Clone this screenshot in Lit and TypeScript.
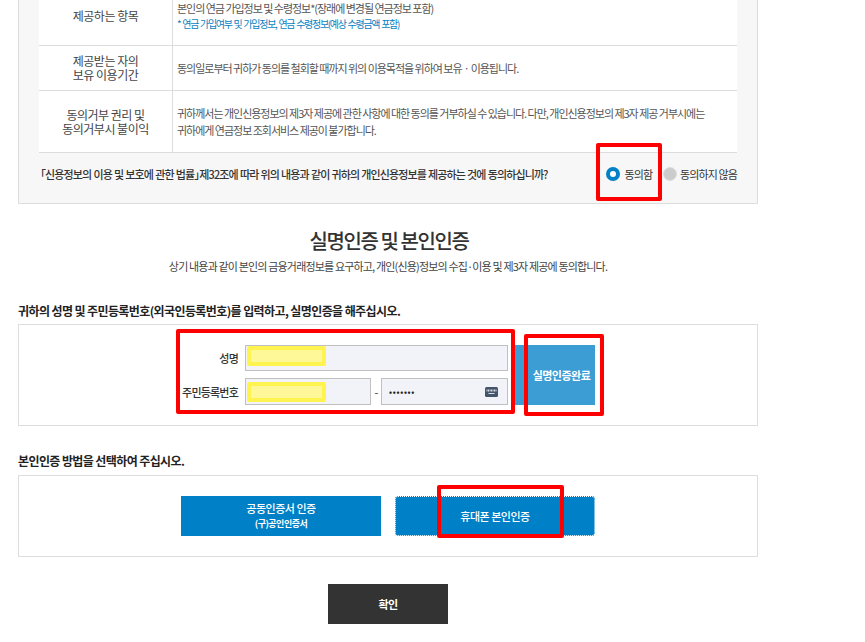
import { css, html, LitElement } from "lit";
import { customElement } from "lit/decorators.js";

@customElement("app-root")
class AppRootElement extends LitElement {
    render() {
        return html`
      <div class="page">
        <section class="panel">
            <div class="row first">
                <div class="head">제공하는 항목</div>
                <div class="cell">
                    <p>본인의 연금 가입정보 및 수령정보*(장래에 변경될 연금정보 포함)</p>
                    <p class="note">* 연금 가입여부 및 가입정보, 연금 수령정보(예상 수령금액 포함)</p>
                </div>
            </div>
            <div class="row second">
                <div class="head">제공받는 자의<br />보유 이용기간</div>
                <div class="cell">
                    <p>동의일로부터 귀하가 동의를 철회할 때까지 위의 이용목적을 위하여 보유ㆍ이용됩니다.</p>
                </div>
            </div>
            <div class="row third">
                <div class="head">동의거부 권리 및<br />동의거부시 불이익</div>
                <div class="cell wide">
                    <p>귀하께서는 개인신용정보의 제3자 제공에 관한 사항에 대한 동의를 거부하실 수 있습니다. 다만, 개인신용정보의 제3자 제공 거부시에는</p>
                    <p>귀하에게 연금정보 조회서비스 제공이 불가합니다.</p>
                </div>
            </div>
            <div class="consent">
                <span class="question">「신용정보의 이용 및 보호에 관한 법률<span class="closing">」</span>제32조에 따라 위의 내용과 같이 귀하의 개인신용정보를 제공하는 것에 동의하십니까?</span>
                <span class="radios">
                    <span class="radio on"></span><span class="agree">동의함</span>
                    <span class="radio off"></span><span>동의하지 않음</span>
                </span>
            </div>
            <i class="mark mark-agree"></i>
        </section>

        <h2>실명인증 및 본인인증</h2>
        <p class="sub">상기 내용과 같이 본인의 금융거래정보를 요구하고, 개인(신용)정보의 수집·이용 및 제3자 제공에 동의합니다.</p>

        <h3 class="name-title">귀하의 성명 및 주민등록번호(외국인등록번호)를 입력하고, 실명인증을 해주십시오.</h3>
        <section class="box name-box">
            <div class="form">
                <div class="fields">
                    <label>성명</label>
                    <div class="input full"><i class="blur"></i></div>
                    <label>주민등록번호</label>
                    <div class="split">
                        <div class="input front"><i class="blur low"></i></div>
                        <span class="dash">-</span>
                        <div class="input back">
                            <span class="dots">•••••••</span>
                            <svg class="keyboard" viewBox="0 0 13 10" width="13" height="10">
                                <rect width="13" height="10" rx="1.5" fill="#44546a" />
                                <path d="M2 2.5v2M3.5 2.5v2M5 2.5v2M6.5 2.5v2M8 2.5v2M9.5 2.5v2M11 2.5v2M3.5 6.5h6" stroke="#fff" stroke-width=".8" fill="none" />
                            </svg>
                        </div>
                    </div>
                </div>
                <a class="done">실명인증완료</a>
                <i class="mark mark-fields"></i>
                <i class="mark mark-done"></i>
            </div>
        </section>

        <h3 class="method-title">본인인증 방법을 선택하여 주십시오.</h3>
        <section class="box method-box">
            <div class="methods">
                <a class="method">공동인증서 인증<small>(구)공인인증서</small></a>
                <a class="method focus">휴대폰 본인인증</a>
                <i class="mark mark-phone"></i>
            </div>
        </section>

        <a class="confirm">확인</a>
      </div>
    `;
    }

    static styles = css`
    :host{
        display: block;
        height: 642px;
        overflow: hidden;
        background: #fff;
        font-family: "Noto Sans CJK KR", "Noto Sans", sans-serif;
        font-size: 11px;
        letter-spacing: -0.6px;
        color: #555;
    }
    p, h2, h3{
        margin: 0;
    }
    i{
        display: block;
    }
    .page{
        width: 740px;
        margin-left: 18px;
        display: flex;
        flex-direction: column;
    }
    .panel{
        position: relative;
        box-sizing: border-box;
        height: 204px;
        padding: 0 20px;
        background: #f7f7f7;
        border: 1px solid #ddd;
        border-top: 0;
    }
    .row{
        display: grid;
        grid-template-columns: 133px 1fr;
        background: #fff;
        border-bottom: 1px solid #ddd;
        box-sizing: border-box;
    }
    .row.first{ height: 46px; }
    .row.second{ height: 45px; }
    .row.third{ height: 62px; }
    .head{
        display: flex;
        align-items: center;
        justify-content: center;
        text-align: center;
        font-size: 12px;
        line-height: 14px;
        color: #444;
        letter-spacing: -0.5px;
    }
    .first .head{
        padding-bottom: 14px;
    }
    .cell{
        border-left: 1px solid #ddd;
        padding-left: 4px;
        display: flex;
        flex-direction: column;
        justify-content: center;
        line-height: 17px;
        letter-spacing: -1.02px;
    }
    .first .cell{
        justify-content: flex-start;
        line-height: 16px;
    }
    .note{
        color: #0a7fc2;
        font-size: 10px;
        letter-spacing: -1.3px;
        word-spacing: 1px;
    }
    .consent{
        display: flex;
        align-items: center;
        justify-content: space-between;
        height: 42px;
        color: #333;
    }
    .question{
        font-weight: 500;
        letter-spacing: -0.88px;
        word-spacing: 0.5px;
        margin-left: -4px;
    }
    .closing{
        margin-right: -5px;
    }
    .radios{
        display: flex;
        align-items: center;
        letter-spacing: -0.9px;
    }
    .radio{
        width: 14px;
        height: 14px;
        border-radius: 50%;
        box-sizing: border-box;
        margin-right: 4px;
    }
    .radio.on{
        border: 4px solid #0080c6;
        background: #fff;
    }
    .radio.off{
        border: 1px solid #ddd;
        background: #ccc;
        margin-left: 11px;
        margin-right: 3px;
    }
    .mark{
        position: absolute;
        box-sizing: border-box;
        border: 4px solid #f00;
        border-radius: 2px;
        pointer-events: none;
    }
    .mark-agree{
        left: 577px;
        top: 143px;
        width: 66px;
        height: 58px;
    }
    h2{
        margin-top: 23px;
        padding-left: 2px;
        height: 28px;
        line-height: 28px;
        text-align: center;
        font-size: 20px;
        font-weight: 500;
        color: #333;
        letter-spacing: -1.4px;
    }
    .sub{
        margin-top: 3px;
        line-height: 16px;
        text-align: center;
        color: #444;
        letter-spacing: -0.83px;
    }
    h3{
        font-size: 12px;
        line-height: 16px;
        font-weight: 700;
        color: #222;
        letter-spacing: -0.6px;
    }
    .name-title{
        margin-top: 29px;
    }
    .method-title{
        margin-top: 27px;
    }
    .box{
        box-sizing: border-box;
        border: 1px solid #ddd;
        display: flex;
        justify-content: center;
    }
    .name-box{
        margin-top: 5px;
        height: 102px;
        padding-top: 20px;
    }
    .method-box{
        margin-top: 6px;
        height: 82px;
        padding-top: 20px;
    }
    .form, .methods{
        position: relative;
        width: 414px;
        display: flex;
    }
    .form{
        height: 60px;
        justify-content: space-between;
    }
    .fields{
        display: grid;
        grid-template-columns: 58px 263px;
        grid-template-rows: 26px 27px;
        column-gap: 6px;
        row-gap: 7px;
    }
    label{
        display: flex;
        align-items: center;
        justify-content: flex-end;
        padding-right: 1px;
        color: #333;
        font-weight: 500;
        letter-spacing: -0.8px;
    }
    .input{
        position: relative;
        box-sizing: border-box;
        height: 100%;
        background: #f2f3f8;
        border: 1px solid #c0c0c0;
    }
    .split{
        display: flex;
        align-items: center;
        height: 27px;
    }
    .front{
        width: 126px;
    }
    .dash{
        width: 10px;
        text-align: center;
        color: #333;
    }
    .back{
        width: 127px;
        display: flex;
        align-items: center;
        justify-content: space-between;
        padding: 0 9px 0 7px;
    }
    .dots{
        font-size: 8px;
        font-weight: 700;
        letter-spacing: 0.7px;
        color: #222;
    }
    .keyboard{
        display: block;
    }
    .blur{
        position: absolute;
        left: 1px;
        top: 0;
        box-sizing: border-box;
        width: 79px;
        height: 20px;
        background: #fff899;
        border: 4px solid #fff44f;
        border-radius: 2px;
    }
    .blur.low{
        top: 3px;
    }
    .done{
        box-sizing: border-box;
        display: flex;
        align-items: center;
        justify-content: center;
        width: 80px;
        height: 60px;
        padding-left: 13px;
        background: #3c9cd4;
        color: #fff;
        font-weight: 700;
        white-space: nowrap;
        letter-spacing: -0.5px;
    }
    .mark-fields{
        left: -5px;
        top: -16px;
        width: 339px;
        height: 85px;
    }
    .mark-done{
        left: 343px;
        top: -11px;
        width: 80px;
        height: 82px;
    }
    .methods{
        height: 40px;
        justify-content: space-between;
    }
    .method{
        box-sizing: border-box;
        width: 200px;
        height: 40px;
        background: #0080c6;
        color: #fff;
        font-weight: 500;
        display: flex;
        flex-direction: column;
        align-items: center;
        justify-content: center;
        line-height: 15px;
        letter-spacing: -0.5px;
    }
    .method small{
        font-size: 9px;
        line-height: 15px;
        font-weight: 700;
    }
    .focus{
        border: 1px dotted #fff;
        border-radius: 3px;
    }
    .mark-phone{
        left: 256px;
        top: -11px;
        width: 127px;
        height: 53px;
    }
    .confirm{
        align-self: center;
        margin-top: 27px;
        width: 120px;
        height: 40px;
        background: #333;
        color: #fff;
        font-weight: 700;
        display: flex;
        align-items: center;
        justify-content: center;
    }
  `;
}
